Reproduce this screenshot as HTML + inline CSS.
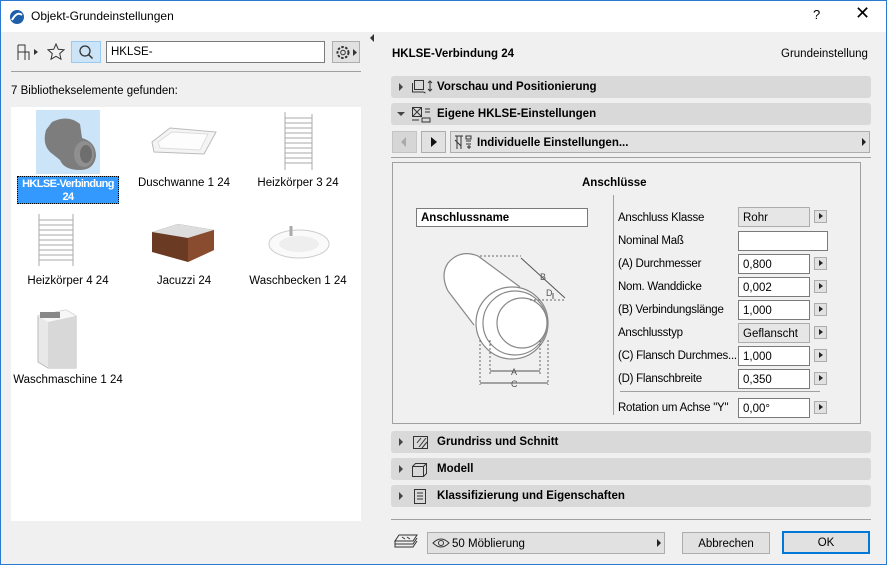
<!DOCTYPE html>
<html><head><meta charset="utf-8"><style>
*{box-sizing:border-box;margin:0;padding:0}
body{width:887px;height:565px;overflow:hidden;background:#f0f0f0;font-family:"Liberation Sans",sans-serif;font-size:11.5px;color:#000;position:relative}
.a{position:absolute;white-space:nowrap}
.win{position:absolute;left:0;top:0;width:887px;height:565px;border:1px solid #2b79d0}
.hdr{position:absolute;left:391px;width:480px;height:22px;background:#d9d9d9;border-radius:3px;font-weight:bold}
.hdr .t{position:absolute;left:46px;top:5px}
.hdr .tri{position:absolute;left:8px;top:7px;width:0;height:0;border-left:4px solid #444;border-top:4px solid transparent;border-bottom:4px solid transparent}
.lbl{position:absolute;left:618px;letter-spacing:-0.25px;white-space:nowrap}
.inp{position:absolute;left:738px;width:72px;height:20px;background:#fff;border:1px solid #7a7a7a;padding:4px 0 0 4px}
.inp.g{background:#e6e6e6;border-color:#adadad}
.ab{position:absolute;left:814px;width:13px;height:13px;background:#e1e1e1;border:1px solid #adadad}
.ab:after{content:"";position:absolute;left:4px;top:2px;border-left:4px solid #222;border-top:3.5px solid transparent;border-bottom:3.5px solid transparent}
.cap{position:absolute;text-align:center;width:110px;white-space:nowrap}
</style></head><body>
<div class="win"></div>
<div class="a" style="left:1px;top:1px;width:885px;height:31px;background:#fff"></div>
<svg class="a" style="left:9px;top:9px" width="16" height="16"><circle cx="8" cy="8" r="7" fill="#1d5fa8"/><path d="M3 11 Q8 2 13 6" stroke="#fff" stroke-width="2" fill="none"/></svg>
<div class="a" style="left:31px;top:9px;font-size:12px">Objekt-Grundeinstellungen</div>
<div class="a" style="left:813px;top:7px;font-size:13px">?</div>
<div class="a" style="left:855px;top:3px;font-size:18px">✕</div>

<svg class="a" style="left:16px;top:43px" width="24" height="18"><path d="M2 2h7v7h4v8M2 2v15M2 9h7v8" stroke="#333" fill="none"/><path d="M18 6l4 3-4 3z" fill="#333"/></svg>
<svg class="a" style="left:47px;top:43px" width="18" height="18"><path d="M9 1l2.3 5.3 5.7.5-4.3 3.8 1.3 5.6L9 13.3 4 16.2l1.3-5.6L1 6.8l5.7-.5z" stroke="#333" fill="none"/></svg>
<div class="a" style="left:71px;top:41px;width:30px;height:22px;background:#cce4f7;border:1px solid #99c9ef"></div>
<svg class="a" style="left:77px;top:44px" width="18" height="18"><circle cx="8" cy="7" r="5" stroke="#333" fill="none" stroke-width="1.3"/><path d="M11.5 10.5l4 4" stroke="#333" stroke-width="1.5"/></svg>
<div class="a" style="left:106px;top:41px;width:219px;height:22px;background:#fff;border:1px solid #7a7a7a;padding:4px 0 0 4px">HKLSE-</div>
<div class="a" style="left:332px;top:41px;width:28px;height:22px;background:#e1e1e1;border:1px solid #adadad"></div>
<svg class="a" style="left:334px;top:44px" width="24" height="17"><circle cx="9" cy="8.5" r="5.5" stroke="#333" fill="none" stroke-dasharray="2.5 1.5" stroke-width="2"/><circle cx="9" cy="8.5" r="2.3" stroke="#333" fill="none"/><path d="M19 5l4 3.5-4 3.5z" fill="#333"/></svg>
<div class="a" style="left:11px;top:71px;width:350px;height:1px;background:#a0a0a0"></div>
<div class="a" style="left:11px;top:85px">7 Bibliothekselemente gefunden:</div>
<div class="a" style="left:11px;top:107px;width:350px;height:414px;background:#fff"></div>
<div class="a" style="left:36px;top:110px;width:64px;height:64px;background:#cce4f7"></div>
<svg class="a" style="left:38px;top:114px" width="60" height="58"><path d="M14 8 Q30 0 42 10 L44 24 Q58 28 58 42 Q56 56 42 56 Q26 56 22 46 L12 38 Q4 30 8 16 Z" fill="#7d7d7d"/><ellipse cx="46" cy="40" rx="10" ry="13" fill="#8f8f8f"/><ellipse cx="48" cy="40" rx="6" ry="9" fill="#6e6e6e"/></svg>
<div class="a" style="left:17px;top:176px;width:102px;height:28px;background:#3399ff;border:1px dotted #000;color:#fff;font-weight:bold;text-align:center;line-height:13px;padding-top:1px;letter-spacing:-0.6px;font-size:11px">HKLSE-Verbindung<br>24</div>
<svg class="a" style="left:150px;top:120px" width="68" height="40"><path d="M2 22 L20 8 L66 12 L54 34 L4 32 Z" fill="#f4f4f4" stroke="#bbb"/><path d="M8 22 L22 12 L58 14 L50 30 L10 28Z" fill="#fdfdfd" stroke="#ddd"/></svg>
<div class="cap" style="left:129px;top:177px">Duschwanne 1 24</div>
<svg class="a" style="left:282px;top:110px" width="34" height="62"><g stroke="#aaa" fill="none"><path d="M3 2v58M30 4v56"/><path d="M3 8h27M3 13h27M3 18h27M3 23h27M3 28h27M3 33h27M3 38h27M3 43h27M3 48h27M3 53h27"/></g></svg>
<div class="cap" style="left:243px;top:177px">Heizkörper 3 24</div>
<svg class="a" style="left:35px;top:212px" width="40" height="56"><g stroke="#aaa" fill="none"><path d="M4 2v52M38 2v52"/><path d="M4 8h34M4 13h34M4 18h34M4 23h34M4 28h34M4 33h34M4 38h34M4 43h34M4 48h34"/></g></svg>
<div class="cap" style="left:13px;top:275px">Heizkörper 4 24</div>
<svg class="a" style="left:148px;top:222px" width="70" height="42"><path d="M4 10 L30 2 L66 8 L66 28 L40 40 L4 30Z" fill="#6b3a22"/><path d="M4 10 L30 2 L66 8 L40 16Z" fill="#ddd"/><path d="M40 16 L66 8 L66 28 L40 40Z" fill="#8a4c2e"/></svg>
<div class="cap" style="left:129px;top:275px">Jacuzzi 24</div>
<svg class="a" style="left:265px;top:222px" width="66" height="40"><ellipse cx="34" cy="22" rx="30" ry="14" fill="#fafafa" stroke="#ccc"/><ellipse cx="34" cy="22" rx="20" ry="8" fill="#eee"/><path d="M26 4v10" stroke="#aaa" stroke-width="3"/></svg>
<div class="cap" style="left:243px;top:275px">Waschbecken 1 24</div>
<svg class="a" style="left:32px;top:306px" width="48" height="64"><path d="M6 10 L34 4 L44 10 L44 62 L16 62 L6 56Z" fill="#e8e8e8" stroke="#bbb"/><path d="M6 10 L34 4 L44 10 L16 16Z" fill="#f7f7f7"/><path d="M16 16 L44 10 L44 62 L16 62Z" fill="#d8d8d8"/><rect x="8" y="6" width="20" height="6" fill="#888"/></svg>
<div class="cap" style="left:13px;top:374px">Waschmaschine 1 24</div>

<div class="a" style="left:370px;top:34px;width:0;height:0;border-right:4px solid #333;border-top:4px solid transparent;border-bottom:4px solid transparent"></div>

<div class="a" style="left:392px;top:48px;font-weight:bold">HKLSE-Verbindung 24</div>
<div class="a" style="left:781px;top:48px">Grundeinstellung</div>
<div class="hdr" style="top:76px"><div class="tri"></div><svg class="a" style="left:20px;top:3px" width="22" height="16"><rect x="3.5" y="1.5" width="9" height="9" fill="none" stroke="#333"/><path d="M1.5 4v9h11M12.5 13l2 1" stroke="#333" fill="none"/><path d="M19 2v10M17 4l2-2 2 2M17 10l2 2 2-2" stroke="#333" fill="none"/></svg><span class="t">Vorschau und Positionierung</span></div>
<div class="hdr" style="top:103px"><div class="a" style="left:6px;top:9px;border-top:4px solid #444;border-left:4px solid transparent;border-right:4px solid transparent"></div><svg class="a" style="left:20px;top:3px" width="22" height="17"><rect x="1.5" y="1.5" width="9" height="9" fill="none" stroke="#333"/><path d="M2 2l8 8M10 2l-8 8" stroke="#333"/><path d="M14 3h5M14 6h5M11 12h8v4h-8zM1 14h7" stroke="#333" fill="none"/></svg><span class="t">Eigene HKLSE-Einstellungen</span></div>
<div class="a" style="left:392px;top:131px;width:25px;height:22px;background:#d6d6d6;border:1px solid #c4c4c4"></div>
<div class="a" style="left:401px;top:137px;border-right:5px solid #aaa;border-top:5px solid transparent;border-bottom:5px solid transparent"></div>
<div class="a" style="left:421px;top:131px;width:25px;height:22px;background:#e1e1e1;border:1px solid #adadad"></div>
<div class="a" style="left:431px;top:137px;border-left:6px solid #111;border-top:5px solid transparent;border-bottom:5px solid transparent"></div>
<div class="a" style="left:450px;top:131px;width:420px;height:22px;background:#e1e1e1;border:1px solid #adadad;font-weight:bold;padding:5px 0 0 26px">Individuelle Einstellungen...</div>
<svg class="a" style="left:454px;top:134px" width="18" height="17"><path d="M1 2h8M3 2v13M7 2v13M1 6l6 6M12 2h5v3h-5zM12 7h5M12 10h5M13 13h4M15 11v4" stroke="#333" fill="none"/></svg>
<div class="a" style="left:862px;top:138px;border-left:4px solid #222;border-top:4px solid transparent;border-bottom:4px solid transparent"></div>
<div class="a" style="left:391px;top:157px;width:480px;height:1px;background:#a0a0a0"></div>

<div class="a" style="left:392px;top:162px;width:469px;height:262px;border:1px solid #a0a0a0"></div>
<div class="a" style="left:582px;top:177px;font-weight:bold">Anschlüsse</div>
<div class="a" style="left:613px;top:195px;width:1px;height:220px;background:#a0a0a0"></div>
<div class="a" style="left:416px;top:208px;width:172px;height:19px;background:#fff;border:1px solid #7a7a7a;font-weight:bold;padding:3px 0 0 4px">Anschlussname</div>
<svg class="a" style="left:440px;top:245px" width="140" height="145" font-family="Liberation Sans" font-size="9" fill="#555">
<path d="M38 11 L80 42 L34 80 L8 46 Q0 30 8 18 Q20 4 38 11Z" fill="#fff" stroke="none"/>
<g stroke="#888" fill="none" stroke-width="1.2"><path d="M38 11 L80 42 M8 46 L34 80 M38 11 Q20 4 8 18 Q0 30 8 46"/></g>
<g stroke="#888" fill="#fff" stroke-width="1.2"><circle cx="72" cy="78" r="36"/><circle cx="75" cy="78" r="32"/><circle cx="82" cy="78" r="25"/></g>
<g stroke="#666" fill="none" stroke-dasharray="2 2"><path d="M40 11h41M90 55h35M40 95v45M50 95v35M100 95v35M108 95v45"/></g>
<g stroke="#555"><path d="M81 13l44 40M113 48v6M50 126h50M40 138h68"/></g>
<text x="100" y="35">B</text><text x="106" y="51">D</text><text x="71" y="130">A</text><text x="71" y="142">C</text></svg>

<div class="lbl" style="top:212px">Anschluss Klasse</div><div class="inp g" style="top:207px">Rohr</div><div class="ab" style="top:210px"></div>
<div class="lbl" style="top:235px">Nominal Maß</div><div class="inp" style="top:231px;width:90px"></div>
<div class="lbl" style="top:258px">(A) Durchmesser</div><div class="inp" style="top:254px">0,800</div><div class="ab" style="top:257px"></div>
<div class="lbl" style="top:281px">Nom. Wanddicke</div><div class="inp" style="top:277px">0,002</div><div class="ab" style="top:280px"></div>
<div class="lbl" style="top:304px">(B) Verbindungslänge</div><div class="inp" style="top:300px">1,000</div><div class="ab" style="top:303px"></div>
<div class="lbl" style="top:327px">Anschlusstyp</div><div class="inp g" style="top:323px">Geflanscht</div><div class="ab" style="top:326px"></div>
<div class="lbl" style="top:350px">(C) Flansch Durchmes...</div><div class="inp" style="top:346px">1,000</div><div class="ab" style="top:349px"></div>
<div class="lbl" style="top:373px">(D) Flanschbreite</div><div class="inp" style="top:369px">0,350</div><div class="ab" style="top:372px"></div>
<div class="a" style="left:620px;top:391px;width:200px;height:1px;background:#a0a0a0"></div>
<div class="lbl" style="top:402px">Rotation um Achse "Y"</div><div class="inp" style="top:398px">0,00°</div><div class="ab" style="top:401px"></div>

<div class="hdr" style="top:431px"><div class="tri"></div><svg class="a" style="left:20px;top:3px" width="22" height="17"><rect x="2.5" y="2.5" width="14" height="12" fill="none" stroke="#333"/><path d="M8 13l7-9M11 14l5-6M6 9l4-5" stroke="#333"/></svg><span class="t">Grundriss und Schnitt</span></div>
<div class="hdr" style="top:458px"><div class="tri"></div><svg class="a" style="left:20px;top:3px" width="22" height="17"><path d="M1.5 5.5h11v10h-11zM1.5 5.5l3-3h11v10l-3 3M12.5 5.5l3-3" stroke="#333" fill="none"/></svg><span class="t">Modell</span></div>
<div class="hdr" style="top:485px"><div class="tri"></div><svg class="a" style="left:20px;top:3px" width="22" height="17"><path d="M3.5 1.5h11v14h-11z M6 5h6M6 8h6M6 11h6" stroke="#333" fill="none"/></svg><span class="t">Klassifizierung und Eigenschaften</span></div>
<div class="a" style="left:391px;top:519px;width:480px;height:1px;background:#a0a0a0"></div>

<svg class="a" style="left:393px;top:533px" width="26" height="18"><path d="M6 2h18l-4 6H2zM2 8v3h18l4-6M2 11v3h18l4-6" stroke="#333" fill="none"/><path d="M9 4l3 2M14 4l3 2" stroke="#333"/></svg>
<div class="a" style="left:427px;top:532px;width:238px;height:22px;background:#e1e1e1;border:1px solid #adadad;padding:5px 0 0 24px">50 Möblierung</div>
<svg class="a" style="left:432px;top:537px" width="18" height="12"><path d="M1 6Q9 -2 17 6Q9 14 1 6Z" stroke="#333" fill="none"/><circle cx="9" cy="6" r="2.5" stroke="#333" fill="none"/></svg>
<div class="a" style="left:657px;top:539px;border-left:4px solid #222;border-top:4px solid transparent;border-bottom:4px solid transparent"></div>
<div class="a" style="left:682px;top:532px;width:88px;height:22px;background:#e1e1e1;border:1px solid #adadad;text-align:center;padding-top:5px">Abbrechen</div>
<div class="a" style="left:782px;top:531px;width:88px;height:23px;background:#e1e1e1;border:2px solid #0078d7;text-align:center;padding-top:4px">OK</div>
</body></html>
